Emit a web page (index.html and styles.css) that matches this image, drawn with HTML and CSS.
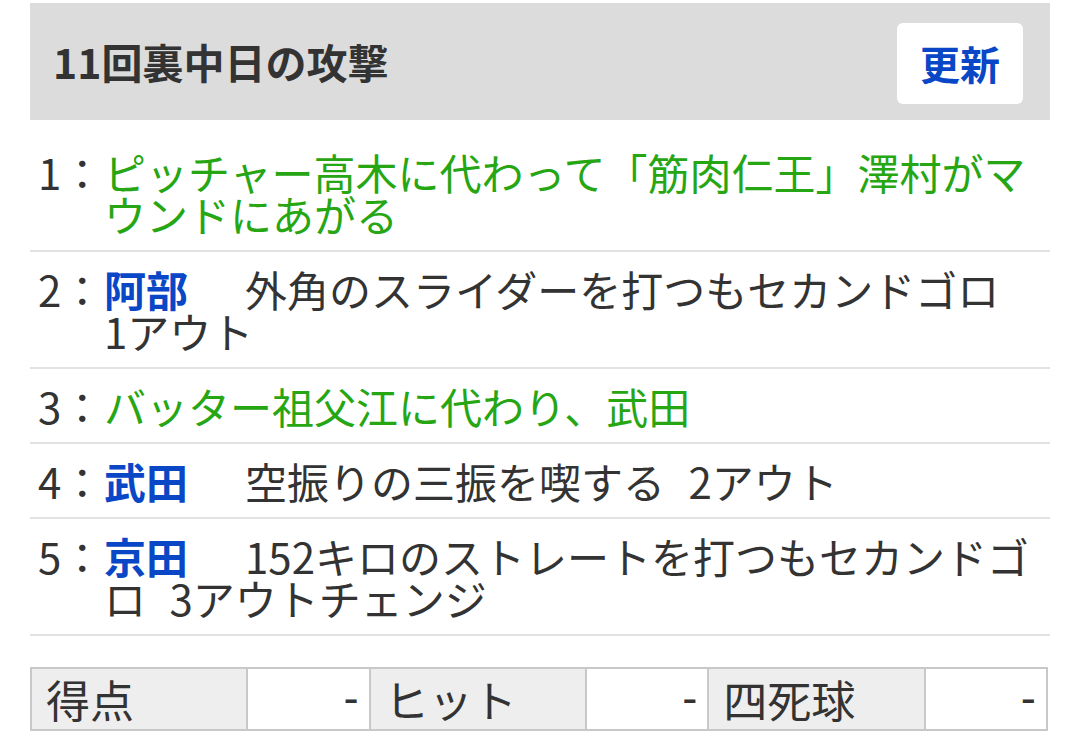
FILE: index.html
```html
<!doctype html>
<html lang="ja">
	<head>
		<meta charset="utf-8">
		<title>11回裏中日の攻撃</title>
		<link rel="stylesheet" href="styles.css">
	</head>
	<body>
		<div class="inning">
			<div class="inning-head">
				<h2 class="inning-title">11回裏中日の攻撃</h2>
				<button class="reload" type="button">更新</button>
			</div>

			<ol class="plays">
				<li class="play">
					<span class="num">1：</span>
					<p class="txt change">ピッチャー高木に代わって「筋肉仁王」澤村がマウンドにあがる</p>
				</li>
				<li class="play">
					<span class="num">2：</span>
					<p class="txt"><b class="name">阿部</b>外角のスライダーを打つもセカンドゴロ 1アウト</p>
				</li>
				<li class="play">
					<span class="num">3：</span>
					<p class="txt change">バッター祖父江に代わり、武田</p>
				</li>
				<li class="play">
					<span class="num">4：</span>
					<p class="txt"><b class="name">武田</b>空振りの三振を喫する 2アウト</p>
				</li>
				<li class="play">
					<span class="num">5：</span>
					<p class="txt"><b class="name">京田</b>152キロのストレートを打つもセカンドゴロ 3アウトチェンジ</p>
				</li>
			</ol>

			<table class="stats">
				<tr>
					<th>得点</th>
					<td>-</td>
					<th>ヒット</th>
					<td>-</td>
					<th>四死球</th>
					<td>-</td>
				</tr>
			</table>
		</div>
	</body>
</html>
```

FILE: styles.css
```css
body {
	margin: 0;
	background: #fff;
	color: #333;
	font-family: "Noto Sans CJK JP", "Noto Sans", sans-serif;
}

.inning {
	width: 1020px;
	margin: 3px 30px 0;
}

.inning-head {
	display: flex;
	align-items: center;
	justify-content: space-between;
	height: 117px;
	padding: 0 27px 0 23px;
	background-color: #dcdcdc;
}

.inning-title {
	margin: 0;
	font-size: 41px;
	font-weight: bold;
	line-height: 1;
	color: #333;
}

.reload {
	width: 126px;
	height: 81px;
	margin-top: 3px;
	padding: 0;
	border: none;
	border-radius: 6px;
	background: #fff;
	color: #0a47c6;
	font-family: inherit;
	font-size: 40px;
	font-weight: bold;
	line-height: 1;
}

.plays {
	margin: 15px 0 0;
	padding: 0;
	list-style: none;
}

.play {
	display: flex;
	padding: 16px 19px 15px 8px;
	border-bottom: 2px solid #e2e2e2;
	font-size: 42px;
	line-height: 42px;
}

.num {
	flex: 0 0 66px;
}

.txt {
	flex: 1;
	margin: 0;
	word-spacing: 14px;
}

.change {
	color: #27a614;
}

.name {
	margin-right: 57px;
	color: #0a47c6;
	font-weight: bold;
}

.stats {
	width: 1018px;
	margin-top: 31px;
	border-collapse: collapse;
	table-layout: fixed;
	font-size: 44px;
	line-height: 60px;
}

.stats th,
.stats td {
	padding: 0 12px 0 14px;
	border: 2px solid #c8c8c8;
	font-weight: normal;
	white-space: nowrap;
}

.stats th {
	width: 188px;
	text-align: left;
	background-color: #eee;
}

.stats td {
	width: 96px;
	padding-right: 10px;
	text-align: right;
	background-color: #fff;
	font-family: "DejaVu Sans", sans-serif;
	font-size: 42px;
}
```
